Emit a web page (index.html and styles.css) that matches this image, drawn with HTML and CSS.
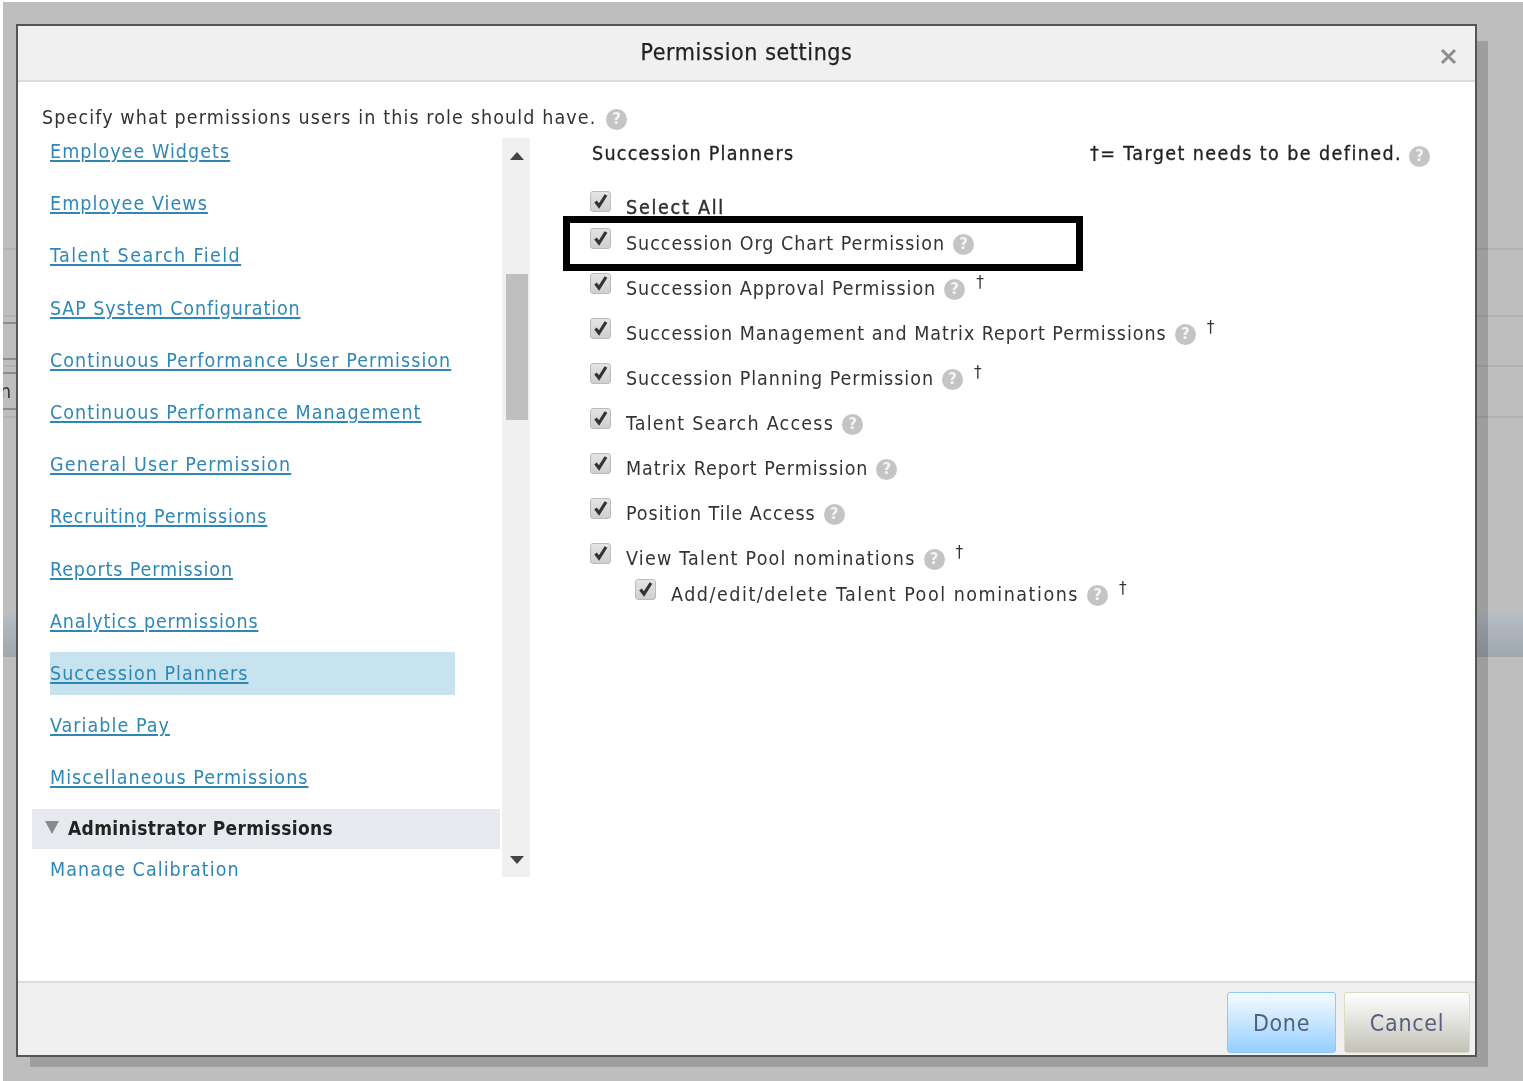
FILE: index.html
```html
<!DOCTYPE html>
<html lang="en">
<head>
<meta charset="utf-8">
<title>Permission settings</title>
<link rel="stylesheet" href="styles.css">
</head>
<body>
<div class="backdrop">
  <span class="bg-letter">n</span>
  <div class="bg-band"></div>
</div>
<section class="dialog">
  <header class="dialog-head">
    <h1>Permission settings</h1>
    <span class="close">
      <svg width="17" height="17" viewBox="0 0 17 17"><path d="M2 2 15 15M15 2 2 15" stroke="#8e8e8e" stroke-width="3" fill="none"/></svg>
    </span>
  </header>
  <div class="dialog-body">
    <p class="intro">Specify what permissions users in this role should have. <i class="help">?</i></p>
    <div class="columns">
      <div class="list-wrap">
        <nav class="list">
          <a href="#">Employee Widgets</a>
          <a href="#">Employee Views</a>
          <a href="#" class="wide">Talent Search Field</a>
          <a href="#" class="narrow">SAP System Configuration</a>
          <a href="#">Continuous Performance User Permission</a>
          <a href="#">Continuous Performance Management</a>
          <a href="#" class="wider">General User Permission</a>
          <a href="#" class="narrow">Recruiting Permissions</a>
          <a href="#" class="narrow">Reports Permission</a>
          <a href="#" class="narrow">Analytics permissions</a>
          <a href="#" class="current">Succession Planners</a>
          <a href="#">Variable Pay</a>
          <a href="#">Miscellaneous Permissions</a>
          <div class="group"><svg width="14" height="13" viewBox="0 0 14 13"><path d="M0 0H14L7 13Z" fill="#8a8a8a"/></svg>Administrator Permissions</div>
          <a href="#" class="last">Manage Calibration</a>
        </nav>
        <div class="scrollbar">
          <svg class="arrow-up" width="14" height="8" viewBox="0 0 14 8"><path d="M7 0 14 8H0Z" fill="#444"/></svg>
          <div class="thumb"></div>
          <svg class="arrow-down" width="14" height="8" viewBox="0 0 14 8"><path d="M0 0H14L7 8Z" fill="#444"/></svg>
        </div>
      </div>
      <div class="perm">
        <div class="perm-head">
          <strong>Succession Planners</strong>
          <span class="legend">†= Target needs to be defined. <i class="help">?</i></span>
        </div>
        <ul class="rows">
          <li class="row select-all"><span class="box"><svg width="16" height="16" viewBox="0 0 16 16"><path d="M2.5 8.5 6 13 13 2" stroke="#333" stroke-width="3.2" fill="none"/></svg></span><b>Select All</b></li>
          <li class="row"><span class="box"><svg width="16" height="16" viewBox="0 0 16 16"><path d="M2.5 8.5 6 13 13 2" stroke="#333" stroke-width="3.2" fill="none"/></svg></span>Succession Org Chart Permission<i class="help">?</i></li>
          <li class="row"><span class="box"><svg width="16" height="16" viewBox="0 0 16 16"><path d="M2.5 8.5 6 13 13 2" stroke="#333" stroke-width="3.2" fill="none"/></svg></span>Succession Approval Permission<i class="help">?</i><sup>†</sup></li>
          <li class="row"><span class="box"><svg width="16" height="16" viewBox="0 0 16 16"><path d="M2.5 8.5 6 13 13 2" stroke="#333" stroke-width="3.2" fill="none"/></svg></span>Succession Management and Matrix Report Permissions<i class="help">?</i><sup>†</sup></li>
          <li class="row"><span class="box"><svg width="16" height="16" viewBox="0 0 16 16"><path d="M2.5 8.5 6 13 13 2" stroke="#333" stroke-width="3.2" fill="none"/></svg></span>Succession Planning Permission<i class="help">?</i><sup>†</sup></li>
          <li class="row wide"><span class="box"><svg width="16" height="16" viewBox="0 0 16 16"><path d="M2.5 8.5 6 13 13 2" stroke="#333" stroke-width="3.2" fill="none"/></svg></span>Talent Search Access<i class="help">?</i></li>
          <li class="row"><span class="box"><svg width="16" height="16" viewBox="0 0 16 16"><path d="M2.5 8.5 6 13 13 2" stroke="#333" stroke-width="3.2" fill="none"/></svg></span>Matrix Report Permission<i class="help">?</i></li>
          <li class="row"><span class="box"><svg width="16" height="16" viewBox="0 0 16 16"><path d="M2.5 8.5 6 13 13 2" stroke="#333" stroke-width="3.2" fill="none"/></svg></span>Position Tile Access<i class="help">?</i></li>
          <li class="row wide"><span class="box"><svg width="16" height="16" viewBox="0 0 16 16"><path d="M2.5 8.5 6 13 13 2" stroke="#333" stroke-width="3.2" fill="none"/></svg></span>View Talent Pool nominations<i class="help">?</i><sup>†</sup></li>
          <li class="row child"><span class="box"><svg width="16" height="16" viewBox="0 0 16 16"><path d="M2.5 8.5 6 13 13 2" stroke="#333" stroke-width="3.2" fill="none"/></svg></span>Add/edit/delete Talent Pool nominations<i class="help">?</i><sup>†</sup></li>
        </ul>
        <div class="marker"></div>
      </div>
    </div>
  </div>
  <footer class="dialog-foot">
    <button class="btn primary" type="button">Done</button>
    <button class="btn" type="button">Cancel</button>
  </footer>
</section>
</body>
</html>
```
FILE: styles.css
```css
* { box-sizing: border-box; }
html, body { margin: 0; height: 100%; }
body {
  background: #fff;
  font-family: "DejaVu Sans", sans-serif;
  font-stretch: condensed;
  font-size: 19.5px;
  letter-spacing: 1px;
  color: #333;
  overflow: hidden;
  filter: blur(0.4px);
}
.backdrop {
  position: absolute;
  z-index: -2;
  left: 3px; top: 2px; right: 0; bottom: 0;
  overflow: hidden;
  background-color: #bebebe;
  background-repeat: no-repeat;
  background-image:
    linear-gradient(#b3b3b3, #b3b3b3),
    linear-gradient(#b3b3b3, #b3b3b3),
    linear-gradient(#b3b3b3, #b3b3b3),
    linear-gradient(#b3b3b3, #b3b3b3),
    linear-gradient(#8c8c8c, #8c8c8c),
    linear-gradient(#8c8c8c, #8c8c8c),
    linear-gradient(#8c8c8c, #8c8c8c),
    linear-gradient(#8c8c8c, #8c8c8c);
  background-size:
    100% 2px, 100% 2px, 100% 2px, 100% 2px,
    13px 2px, 13px 2px, 13px 2px, 13px 2px;
  background-position:
    0 246px, 0 313px, 0 363px, 0 414px,
    0 320px, 0 356px, 0 370px, 0 406px;
}
.bg-letter { position: absolute; left: -3px; top: 378px; color: #333; }
.bg-band {
  position: absolute; left: 0; right: 0; top: 612px; height: 43px;
  background: linear-gradient(#b6bdc4, #9fa7af);
}
.dialog {
  position: absolute;
  left: 16px; top: 24px;
  width: 1461px; height: 1033px;
  background: #fff;
  border: 2px solid #555;
  display: flex;
  flex-direction: column;
}
.dialog::before {
  content: "";
  position: absolute;
  z-index: -1;
  left: 12px; top: 15px; right: -13px; bottom: -12px;
  background: rgba(0, 0, 0, .17);
}
.dialog-head {
  height: 56px;
  flex: none;
  background: #f0f0f0;
  border-bottom: 2px solid #dcdcdc;
  display: flex;
  align-items: center;
  justify-content: center;
  position: relative;
}
.dialog-head h1 { margin: 0 0 3px; font-size: 23px; font-weight: 400; color: #222; letter-spacing: .6px; -webkit-text-stroke: 0.25px #222; }
.close { position: absolute; right: 18px; top: 22px; line-height: 0; }
.dialog-body { flex: 1; min-height: 0; padding: 22px 0 0 14px; }
.intro { margin: 0 0 0 10px; line-height: 28px; color: #333; height: 34px; letter-spacing: 1.12px; }
.help {
  display: inline-block;
  width: 21px; height: 21px;
  border-radius: 50%;
  background: #c4c4c4;
  color: #f4f4f4;
  font: 700 15px/21px "DejaVu Sans", sans-serif;
  letter-spacing: 0;
  text-align: center;
  vertical-align: 0;
  margin-left: 3px;
}
.columns { display: flex; }
.list-wrap { display: flex; width: 498px; height: 739px; flex: none; }
.list { width: 468px; height: 739px; overflow: hidden; padding-top: 1px; }
.list a {
  display: block;
  margin: 0 0 0 18px;
  width: 405px;
  height: 52.2px;
  line-height: 26px;
  color: #2e87b4;
  letter-spacing: 1.05px;
  text-decoration-thickness: 2px;
  text-underline-offset: 2px;
}
.list a.wide { letter-spacing: 1.45px; }
.list a.wider { letter-spacing: 1.15px; }
.list a.narrow { letter-spacing: .87px; }
.list a.current {
  background: #c7e3f0;
  height: 43px;
  line-height: 43px;
  margin-top: -9px;
  margin-bottom: 18.4px;
}
.list .group {
  display: flex;
  align-items: center;
  gap: 9px;
  height: 40px;
  margin-top: -9px;
  padding: 0 0 2px 13px;
  background: #e6eaef;
  color: #222;
  font-weight: 700;
  font-size: 19px;
  letter-spacing: .35px;
}
.list a.last { margin-top: 8px; text-decoration: none; }
.scrollbar {
  width: 28px;
  margin-left: 2px;
  background: #f0f0f0;
  position: relative;
  height: 739px;
}
.arrow-up { position: absolute; left: 8px; top: 14px; }
.arrow-down { position: absolute; left: 8px; bottom: 13px; }
.thumb { position: absolute; left: 4px; right: 2px; top: 136px; height: 146px; background: #bfbfbf; }
.perm { flex: 1; padding-left: 60px; position: relative; }
.perm-head { display: flex; justify-content: space-between; width: 840px; height: 38px; padding: 4px 0 0 2px; color: #222; }
.perm-head strong { font-weight: 400; letter-spacing: 1.25px; -webkit-text-stroke: 0.3px #222; }
.legend { letter-spacing: 1.42px; -webkit-text-stroke: 0.3px #222; }
.legend .help { -webkit-text-stroke: 0; margin-left: 0; vertical-align: -1px; }
.rows { list-style: none; margin: 0; padding: 0; }
.row { display: flex; align-items: center; height: 45px; white-space: pre; position: relative; letter-spacing: .98px; }
.row.wide { letter-spacing: 1.24px; }
.row .help { margin-left: 8px; margin-top: 2px; }
.row sup { font-size: 17px; margin-left: 11px; line-height: 1; align-self: flex-start; margin-top: 8px; letter-spacing: 0; }
.row.select-all { height: 44.5px; }
.row.child { height: 27px; padding-left: 45px; letter-spacing: 1.54px; }
.row.child sup { margin-top: -1px; }
.row.select-all b { font-weight: 400; -webkit-text-stroke: 0.4px #222; margin-top: 18px; letter-spacing: 1.75px; }
.box {
  flex: none;
  width: 21px; height: 21px;
  margin-right: 15px;
  margin-top: -10px;
  border: 1px solid #bbb;
  border-radius: 3px;
  background: linear-gradient(#e4e4e4, #cfcfcf);
  display: flex; align-items: center; justify-content: center;
}
.row.select-all .box { margin-top: 6px; }
.marker {
  position: absolute;
  top: 78px;
  left: 33px;
  width: 520px; height: 55px;
  border: 7px solid #000;
  pointer-events: none;
}
.dialog-foot {
  flex: none;
  height: 74px;
  border-top: 2px solid #dcdcdc;
  background: #f0f0f0;
  display: flex;
  justify-content: flex-end;
  align-items: flex-end;
  gap: 8px;
  padding: 0 5px 2px 0;
}
.btn {
  width: 126px; height: 61px;
  border: 1px solid #dcdcc0;
  border-radius: 3px;
  background: linear-gradient(#fff, #c2c2b8);
  font: inherit;
  font-size: 23px;
  font-stretch: condensed;
  letter-spacing: .7px;
  color: #565f7c;
}
.btn.primary {
  width: 109px;
  border-color: #8cc8ff;
  background: linear-gradient(#f6fbff, #96cfff);
}
```
